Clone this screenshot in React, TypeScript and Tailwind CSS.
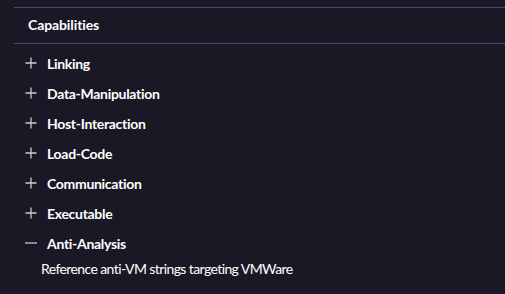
import React from "react";

const items = ["Linking", "Data-Manipulation", "Host-Interaction", "Load-Code", "Communication", "Executable"];

function Plus() {
  return (
    <svg width="12" height="12" viewBox="0 0 12 12" className="shrink-0">
      <path d="M6 0.5V11.5M0.5 6H11.5" stroke="#c9c9d1" strokeWidth="1.3" />
    </svg>
  );
}
function Minus() {
  return (
    <svg width="12" height="12" viewBox="0 0 12 12" className="shrink-0">
      <path d="M0 6H12" stroke="#c9c9d1" strokeWidth="1.3" />
    </svg>
  );
}

export default function App() {
  return (
    <div className="w-[505px] h-[294px] bg-[#1a1825] overflow-hidden" style={{ fontFamily: "Lato, 'Noto Sans', sans-serif" }}>
      <div className="ml-[14px] pt-[7px]">
        <div className="border-t border-b border-[#4b4966] h-[37px] flex items-center pl-[14px] pb-[2px]">
          <span className="text-[14px] font-bold text-white tracking-[-0.1px]">Capabilities</span>
        </div>
        <div className="pl-[11px] pt-[4px] flex flex-col">
          {items.map((t) => (
            <div key={t} className="h-[30px] flex items-center gap-[10px]">
              <Plus />
              <span className="text-[14px] font-bold text-white tracking-[-0.3px]">{t}</span>
            </div>
          ))}
          <div className="h-[30px] flex items-center gap-[10px]">
            <Minus />
            <span className="text-[14px] font-bold text-white tracking-[-0.3px]">Anti-Analysis</span>
          </div>
          <div className="pl-[16px] pt-[1px] text-[14px] text-white leading-[20px] tracking-[-0.6px]">Reference anti-VM strings targeting VMWare</div>
        </div>
      </div>
    </div>
  );
}
